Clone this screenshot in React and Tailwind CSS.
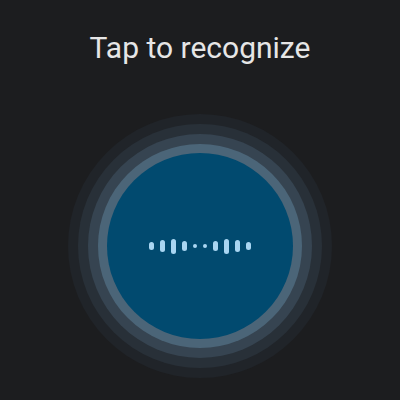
export default function App() {
  const bars = [8, 12, 15, 10, 4, 4, 10, 15, 12, 8];
  return (
    <div className="flex h-[400px] w-[400px] flex-col items-center bg-[#1c1d1f] font-['Roboto',sans-serif]">
      <h1 className="mt-[30px] text-[30px] leading-[36px] text-[#e6e6e6]">Tap to recognize</h1>
      <button className="mt-[48px] flex h-[264px] w-[264px] items-center justify-center rounded-full bg-[#202429] p-[10px]">
        <div className="flex h-full w-full items-center justify-center rounded-full bg-[#283038] p-[10px]">
          <div className="flex h-full w-full items-center justify-center rounded-full bg-[#364451] p-[10px]">
            <div className="flex h-full w-full items-center justify-center rounded-full bg-[#4b6578] p-[9px]">
              <div className="flex h-full w-full items-center justify-center gap-[6px] rounded-full bg-[#014a6f]">
                {bars.map((h, i) => (
                  <span
                    key={i}
                    className={h === 4 ? "h-[4px] w-[4px] rounded-full bg-[#a9d6f2]" : "w-[5px] rounded-full bg-[#a9d6f2]"}
                    style={h === 4 ? undefined : { height: h }}
                  />
                ))}
              </div>
            </div>
          </div>
        </div>
      </button>
    </div>
  );
}
